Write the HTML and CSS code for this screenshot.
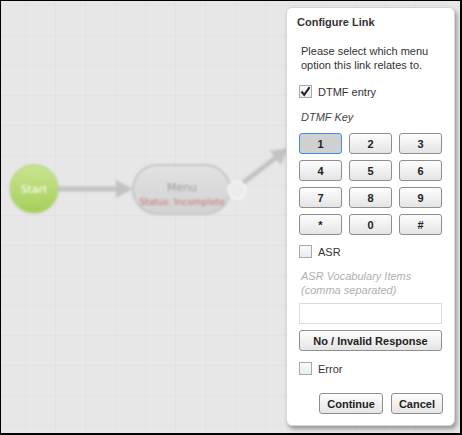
FILE: index.html
```html
<!DOCTYPE html>
<html lang="en">

<head>
    <meta charset="UTF-8">
    <title>Configure Link</title>
    <link rel="stylesheet" href="styles.css">
</head>

<body>

    <div id="frame">
        <div id="canvas">
            <svg class="diagram" width="462" height="435" viewBox="0 0 462 435">
                <defs>
                    <linearGradient id="greenFill" x1="0" y1="0" x2="0" y2="1">
                        <stop offset="0" stop-color="#c9e58f"/>
                        <stop offset="1" stop-color="#a6ce5a"/>
                    </linearGradient>
                    <linearGradient id="greyFill" x1="0" y1="0" x2="0" y2="1">
                        <stop offset="0" stop-color="#e2e2e2"/>
                        <stop offset="1" stop-color="#d2d2d2"/>
                    </linearGradient>
                </defs>

                <!-- start -> menu -->
                <line x1="56" y1="189" x2="120" y2="189" stroke="#c3c3c3" stroke-width="5"/>
                <polygon points="116,180 133,189 116,198" fill="#c3c3c3"/>

                <!-- menu -> off to the right -->
                <line x1="243" y1="183" x2="278" y2="156" stroke="#c3c3c3" stroke-width="5"/>
                <polygon points="288,148 270,151 281,165" fill="#c3c3c3"/>

                <circle cx="34" cy="189" r="24" fill="url(#greenFill)" stroke="#b9d48c" stroke-width="1.5"/>
                <text x="34" y="193" class="node-label start-label">Start</text>

                <rect x="133" y="165" width="97" height="49" rx="24.5" fill="url(#greyFill)" stroke="#c6c6c6" stroke-width="2"/>
                <circle cx="237" cy="190" r="9" fill="#ebebeb" stroke="#f6f6f6" stroke-width="1.5"/>
                <text x="182" y="191" class="node-label menu-label">Menu</text>
                <text x="182" y="205" class="node-label status-label">Status: Incomplete</text>
            </svg>
        </div>

        <div id="linkDialog">
            <h3 class="dialog-title">Configure Link</h3>

            <p class="intro">Please select which menu option this link relates to.</p>

            <label class="check-row">
                <span class="check-box checked">
                    <svg width="11" height="11" viewBox="0 0 11 11"><polyline points="1.5,5.5 4.2,8.8 9.6,1.2" fill="none" stroke="#222" stroke-width="2"/></svg>
                </span>
                DTMF entry
            </label>

            <div class="field-label">DTMF Key</div>

            <div class="keypad">
                <button class="key selected">1</button>
                <button class="key">2</button>
                <button class="key">3</button>
                <button class="key">4</button>
                <button class="key">5</button>
                <button class="key">6</button>
                <button class="key">7</button>
                <button class="key">8</button>
                <button class="key">9</button>
                <button class="key">*</button>
                <button class="key">0</button>
                <button class="key">#</button>
            </div>

            <label class="check-row asr-row">
                <span class="check-box"></span>
                ASR
            </label>

            <div class="field-label muted">ASR Vocabulary Items<br>(comma separated)</div>
            <input type="text" class="vocab-input">

            <button class="wide-button">No / Invalid Response</button>

            <label class="check-row error-row">
                <span class="check-box"></span>
                Error
            </label>

            <div class="actions">
                <button class="action">Continue</button>
                <button class="action">Cancel</button>
            </div>
        </div>
    </div>

</body>

</html>
```

FILE: styles.css
```css
body {
    margin: 0;
    font-family: "Liberation Sans", Arial, sans-serif;
    font-size: 11px;
    color: #222;
}

#frame {
    position: relative;
    width: 462px;
    height: 435px;
    box-sizing: border-box;
    border: 1px solid #000;
    border-right-width: 2px;
    border-bottom-width: 2px;
    overflow: hidden;
}

#canvas {
    width: 100%;
    height: 100%;
    background-color: #e7e7e7;
    background-image:
        linear-gradient(90deg, #e2e2e2 1px, transparent 1px),
        linear-gradient(#e2e2e2 1px, transparent 1px);
    background-size: 30px 30px;
    background-position: 24px 4px;
}

.diagram {
    position: absolute;
    left: -1px;
    top: -1px;
    filter: blur(1px);
}

.node-label {
    font-family: "DejaVu Sans", sans-serif;
    text-anchor: middle;
}

.start-label {
    fill: #fff;
    font-size: 11px;
}

.menu-label {
    fill: #9a9a9a;
    font-size: 11px;
}

.status-label {
    fill: #c77272;
    font-size: 9px;
}

/* Dialog */
#linkDialog {
    position: absolute;
    left: 285px;
    top: 6px;
    width: 169px;
    height: 419px;
    box-sizing: border-box;
    padding: 0 14px 0 12px;
    background-color: #fff;
    border: 1px solid #d6d6d6;
    border-radius: 6px;
    box-shadow: 2px 3px 4px rgba(0, 0, 0, 0.35);
}

.dialog-title {
    margin: 7px 0 0 -2px;
    font-size: 11px;
    line-height: 14px;
    font-weight: bold;
    color: #333;
}

.intro {
    margin: 15px 0 0 2px;
    line-height: 14px;
    color: #333;
}

.check-row {
    display: flex;
    align-items: center;
    gap: 6px;
    height: 13px;
    color: #333;
}

.check-row:first-of-type {
    margin-top: 13px;
}

.check-box {
    display: flex;
    align-items: center;
    justify-content: center;
    width: 11px;
    height: 11px;
    border: 1px solid #a9a9a9;
    background: linear-gradient(#fafafa, #ececec);
}

.field-label {
    margin: 12px 0 0 2px;
    font-style: italic;
    line-height: 14px;
    color: #444;
}

.field-label.muted {
    margin-top: 11px;
    color: #b0b0b0;
}

.keypad {
    display: grid;
    grid-template-columns: repeat(3, 43px);
    grid-auto-rows: 21px;
    column-gap: 7px;
    row-gap: 6px;
    margin-top: 9px;
}

button {
    font-family: inherit;
    font-size: 11px;
    font-weight: bold;
    color: #222;
    padding: 0;
    border: 1px solid #8e8e8e;
    border-radius: 3px;
    background: linear-gradient(#fdfdfd, #e4e4e4);
    cursor: pointer;
}

.key.selected {
    background: #d0d0d0;
    border-color: #3d8fe3;
}

.asr-row {
    margin-top: 10px;
}

.vocab-input {
    display: block;
    width: 143px;
    height: 21px;
    box-sizing: border-box;
    margin-top: 6px;
    border: 1px solid #dcdcdc;
}

.wide-button {
    display: block;
    width: 143px;
    height: 21px;
    margin-top: 6px;
}

.error-row {
    margin-top: 11px;
}

.actions {
    display: flex;
    justify-content: flex-end;
    gap: 8px;
    margin: 18px -3px 0 0;
}

.action {
    height: 21px;
    padding: 0 7px;
}
```
